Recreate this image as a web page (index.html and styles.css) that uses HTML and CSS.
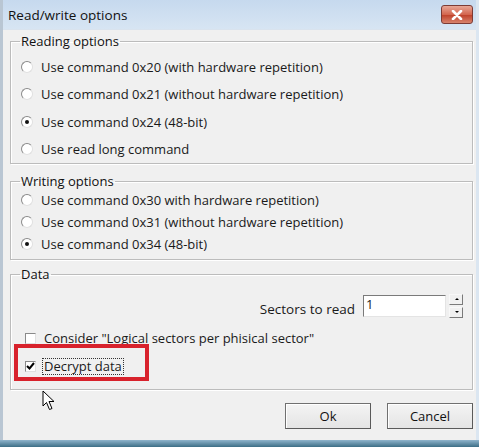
FILE: index.html
```html
<!DOCTYPE html>
<html>
<head>
<meta charset="utf-8">
<link rel="stylesheet" href="styles.css">
</head>
<body>
<div class="window">
  <div class="titlebar">
    <span class="title">Read/write options</span>
    <span class="close"><svg width="14" height="10" viewBox="0 0 14 10"><path d="M3 1 L11 9 M11 1 L3 9" stroke="#fff" stroke-width="2.6" stroke-linecap="round"/></svg></span>
  </div>
  <div class="client">
    <fieldset class="group reading">
      <legend>Reading options</legend>
      <div class="opt"><span class="radio"></span>Use command 0x20 (with hardware repetition)</div>
      <div class="opt"><span class="radio"></span>Use command 0x21 (without hardware repetition)</div>
      <div class="opt"><span class="radio on"></span>Use command 0x24 (48-bit)</div>
      <div class="opt"><span class="radio"></span>Use read long command</div>
    </fieldset>
    <fieldset class="group writing">
      <legend>Writing options</legend>
      <div class="opt"><span class="radio"></span>Use command 0x30 with hardware repetition)</div>
      <div class="opt"><span class="radio"></span>Use command 0x31 (without hardware repetition)</div>
      <div class="opt"><span class="radio on"></span>Use command 0x34 (48-bit)</div>
    </fieldset>
    <fieldset class="group data">
      <legend>Data</legend>
      <div class="sectors">
        <span class="slabel">Sectors to read</span>
        <span class="input">1</span>
        <span class="spin"><span class="sb up"></span><span class="sb down"></span></span>
      </div>
      <div class="chk consider"><span class="box"></span>Consider "Logical sectors per phisical sector"</div>
      <div class="chk decrypt"><span class="box on"><svg width="9" height="8" viewBox="0 0 9 8"><path d="M1 4 L3.5 6.5 L8 1" stroke="#000" stroke-width="2" fill="none"/></svg></span><span class="focus">Decrypt data</span></div>
      <span class="highlight"></span>
    </fieldset>
    <div class="buttons">
      <span class="cursor"><svg width="16" height="22" viewBox="0 0 16 22"><path d="M1 1 L1 16 L4.5 12.5 L7.5 19.5 L10 18.5 L7 11.5 L12 11.5 Z" fill="#fff" stroke="#000" stroke-width="1"/></svg></span>
      <button class="btn">Ok</button>
      <button class="btn">Cancel</button>
    </div>
  </div>
  <div class="bottom"></div>
</div>
</body>
</html>
```
FILE: styles.css
```css
html, body {
  margin: 0;
  padding: 0;
  background: #f0f0f0;
}
body {
  font-family: "Open Sans", "DejaVu Sans", sans-serif;
  font-size: 13px;
  color: #1a1a1a;
}
.window {
  width: 479px;
  height: 447px;
  box-sizing: border-box;
  background: #f0f0f0;
  border-left: 3px solid #b9c6d3;
  border-right: 3px solid #dbe6f1;
  display: flex;
  flex-direction: column;
}
.titlebar {
  height: 30px;
  flex: none;
  background: linear-gradient(#c6d9ee, #d7e5f3);
  display: flex;
  align-items: center;
  justify-content: space-between;
  padding: 0 3px 0 5px;
  box-sizing: border-box;
  border-bottom: 1px solid #d9e3ee;
}
.title {
  font-size: 13.5px;
  color: #111;
  margin-top: 1px;
}
.close {
  width: 32px;
  height: 19px;
  margin-top: 0px;
  border: 1px solid #7c3b35;
  border-radius: 3px;
  background: linear-gradient(#e8a696, #d3664f 50%, #c0442d 55%, #d8836c);
  display: flex;
  align-items: center;
  justify-content: center;
  box-sizing: border-box;
}
.client {
  flex: 1;
  padding: 3px 3px 0 7px;
  display: flex;
  flex-direction: column;
}
.group {
  margin: 0;
  border: 1px solid #bcbcbc;
  box-shadow: inset 1px 1px 0 #fff, 1px 1px 0 #fff;
  padding: 0 0 0 10px;
  min-width: 0;
  position: relative;
}
.group legend {
  padding: 0 1px;
  margin-left: -1px;
  font-size: 13px;
  line-height: 16px;
  color: #111;
}
.reading {
  height: 131px;
  box-sizing: border-box;
  padding-top: 4px;
}
.writing {
  margin-top: 9px;
  height: 87px;
  box-sizing: border-box;
}
.data {
  margin-top: 6px;
  height: 124px;
  box-sizing: border-box;
}
.opt {
  display: flex;
  align-items: center;
  height: 27.5px;
  white-space: nowrap;
}
.writing .opt {
  height: 22px;
}
.radio {
  width: 10px;
  height: 10px;
  border-radius: 50%;
  border: 1px solid #8a8a8a;
  border-right-color: #e0e0e0;
  border-bottom-color: #e0e0e0;
  background: #fff;
  margin-right: 8px;
  position: relative;
  flex: none;
}
.radio.on::after {
  content: "";
  position: absolute;
  left: 3px;
  top: 3px;
  width: 4px;
  height: 4px;
  border-radius: 50%;
  background: #111;
}
.sectors {
  display: flex;
  align-items: center;
  justify-content: flex-end;
  margin-top: 11px;
  padding-right: 9px;
  height: 26px;
}
.slabel {
  font-size: 13.5px;
  margin-right: 8px;
  margin-top: 6px;
}
.input {
  width: 79px;
  height: 20px;
  border: 1px solid #7a7a7a;
  border-right-color: #e4e4e4;
  border-bottom-color: #e4e4e4;
  background: #fff;
  padding-left: 2px;
  line-height: 16px;
  font-size: 13px;
  box-sizing: content-box;
}
.spin {
  display: flex;
  flex-direction: column;
  margin-left: 3px;
  height: 24px;
}
.sb {
  width: 14px;
  height: 11px;
  border: 1px solid #f8f8f8;
  border-right-color: #7a7a7a;
  border-bottom-color: #7a7a7a;
  position: relative;
  box-sizing: border-box;
  flex: none;
}
.sb::after {
  content: "";
  position: absolute;
  left: 5px;
  top: 3px;
  border-left: 2px solid transparent;
  border-right: 2px solid transparent;
}
.sb.up::after { border-bottom: 2px solid #000; }
.sb.down::after { border-top: 2px solid #000; }
.sb.down { margin-top: 2px; }
.chk {
  display: flex;
  align-items: center;
  height: 20px;
  margin-left: 4px;
  white-space: nowrap;
}
.consider { margin-top: 9px; }
.decrypt { margin-top: 8px; }
.box {
  width: 11px;
  height: 11px;
  box-sizing: border-box;
  border: 1px solid #8a8a8a;
  border-right-color: #e0e0e0;
  border-bottom-color: #e0e0e0;
  background: #fff;
  margin-right: 8px;
  flex: none;
  display: flex;
  align-items: center;
  justify-content: center;
}
.focus {
  outline: 1px dotted #333;
  line-height: 15px;
  margin-left: -1px;
  padding: 0 1px;
}
.highlight {
  position: absolute;
  left: 3px;
  top: 62px;
  width: 127px;
  height: 29px;
  border: 4px solid #d8222c;
}
.buttons {
  display: flex;
  justify-content: flex-end;
  gap: 16px;
  padding-right: 0;
  margin-top: 13px;
  position: relative;
}
.cursor {
  position: absolute;
  left: 32px;
  top: -13px;
}
.btn {
  width: 86px;
  height: 26px;
  font-family: inherit;
  font-size: 13px;
  color: #111;
  background: linear-gradient(#f4f4f4, #e4e4e4);
  border: 1px solid #707070;
  border-right-color: #5a5a5a;
  border-bottom-color: #5a5a5a;
  box-shadow: inset 1px 1px 0 #fff;
  padding: 0;
}
.bottom {
  height: 7px;
  background: linear-gradient(#8fb4cc, #3c6e86);
  margin: 0 -3px;
}
```
